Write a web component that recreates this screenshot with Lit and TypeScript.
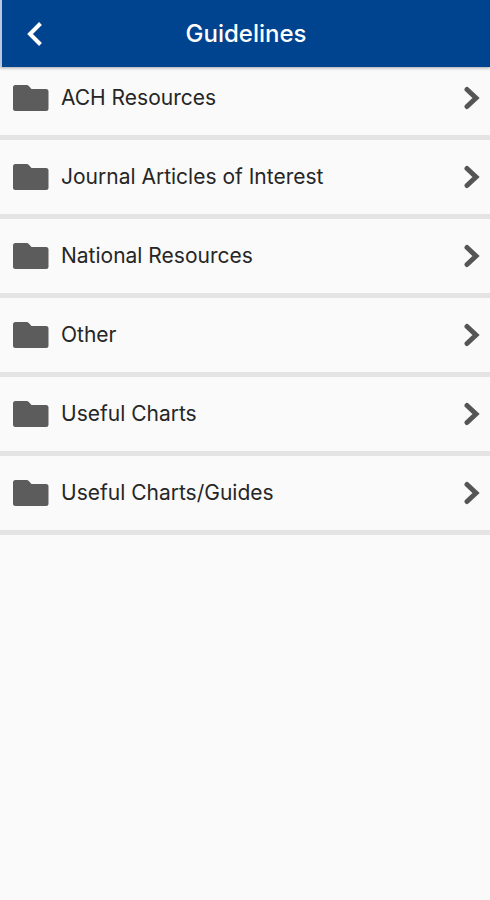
import { LitElement, html, css } from "lit";
import { customElement, property } from "lit/decorators.js";

@customElement("folder-row")
export class FolderRow extends LitElement {
  @property() label = "";

  static styles = css`
    :host {
      display: block;
    }
    .row {
      display: flex;
      align-items: center;
      gap: 12px;
      width: 100%;
      box-sizing: border-box;
      padding: 24px 10px 24px 12px;
      border: 0;
      background: none;
      color: #262626;
      font: 400 21px/26px Inter, "Liberation Sans", sans-serif;
      text-align: left;
      cursor: pointer;
    }
    .label {
      flex: 1;
      min-width: 0;
    }
    .folder,
    .chevron {
      flex: none;
      display: block;
    }
    .folder {
      fill: #5c5c5c;
    }
    .chevron {
      fill: none;
      stroke: #555555;
      stroke-width: 5;
      stroke-linecap: round;
    }
  `;

  render() {
    return html`
      <button class="row" type="button">
        <svg class="folder" width="37" height="26" viewBox="0 0 37 26" aria-hidden="true">
          <path d="M3.5 0H14.5Q16 0 17 1.2L19.5 4H34Q36.5 4 36.5 6.5V23.5Q36.5 26 34 26H3.5Q1 26 1 23.5V2.5Q1 0 3.5 0Z" />
        </svg>
        <span class="label">${this.label}</span>
        <svg class="chevron" width="18" height="24" viewBox="0 0 18 24" aria-hidden="true">
          <path d="M5 3.5L14 12L5 20.5" />
        </svg>
      </button>
    `;
  }
}

@customElement("app-root")
export class AppRoot extends LitElement {
  private folders = [
    "ACH Resources",
    "Journal Articles of Interest",
    "National Resources",
    "Other",
    "Useful Charts",
    "Useful Charts/Guides",
  ];

  static styles = css`
    :host {
      display: block;
      min-height: 100vh;
      background: #fafafa;
      font-family: Inter, "Liberation Sans", sans-serif;
    }
    .bar {
      display: grid;
      grid-template-columns: 68px 1fr 68px;
      align-items: center;
      height: 67px;
      box-sizing: border-box;
      border-left: 2px solid #b9c8df;
      background: #00438f;
      box-shadow: 0 1px 3px rgba(0, 0, 0, 0.35);
      position: relative;
    }
    .back {
      display: flex;
      align-items: center;
      justify-content: center;
      height: 100%;
      padding: 0;
      border: 0;
      background: none;
      cursor: pointer;
    }
    .arrow {
      fill: none;
      stroke: #ffffff;
      stroke-width: 4;
    }
    .title {
      margin: 0;
      color: #ffffff;
      font-size: 24px;
      line-height: 30px;
      font-weight: 500;
      text-align: center;
    }
    .list {
      margin: 0;
      padding: 0;
      list-style: none;
    }
    .item {
      border-bottom: 5px solid #e4e4e4;
    }
    .item:first-child {
      margin-top: -6px;
    }
  `;

  render() {
    return html`
      <header class="bar">
        <button class="back" type="button" aria-label="Back">
          <svg class="arrow" width="18" height="26" viewBox="0 0 18 26" aria-hidden="true">
            <path d="M13.5 2.5L3 13L13.5 23.5" />
          </svg>
        </button>
        <h1 class="title">Guidelines</h1>
      </header>
      <ul class="list">
        ${this.folders.map(
          (name) => html`<li class="item"><folder-row label=${name}></folder-row></li>`,
        )}
      </ul>
    `;
  }
}
